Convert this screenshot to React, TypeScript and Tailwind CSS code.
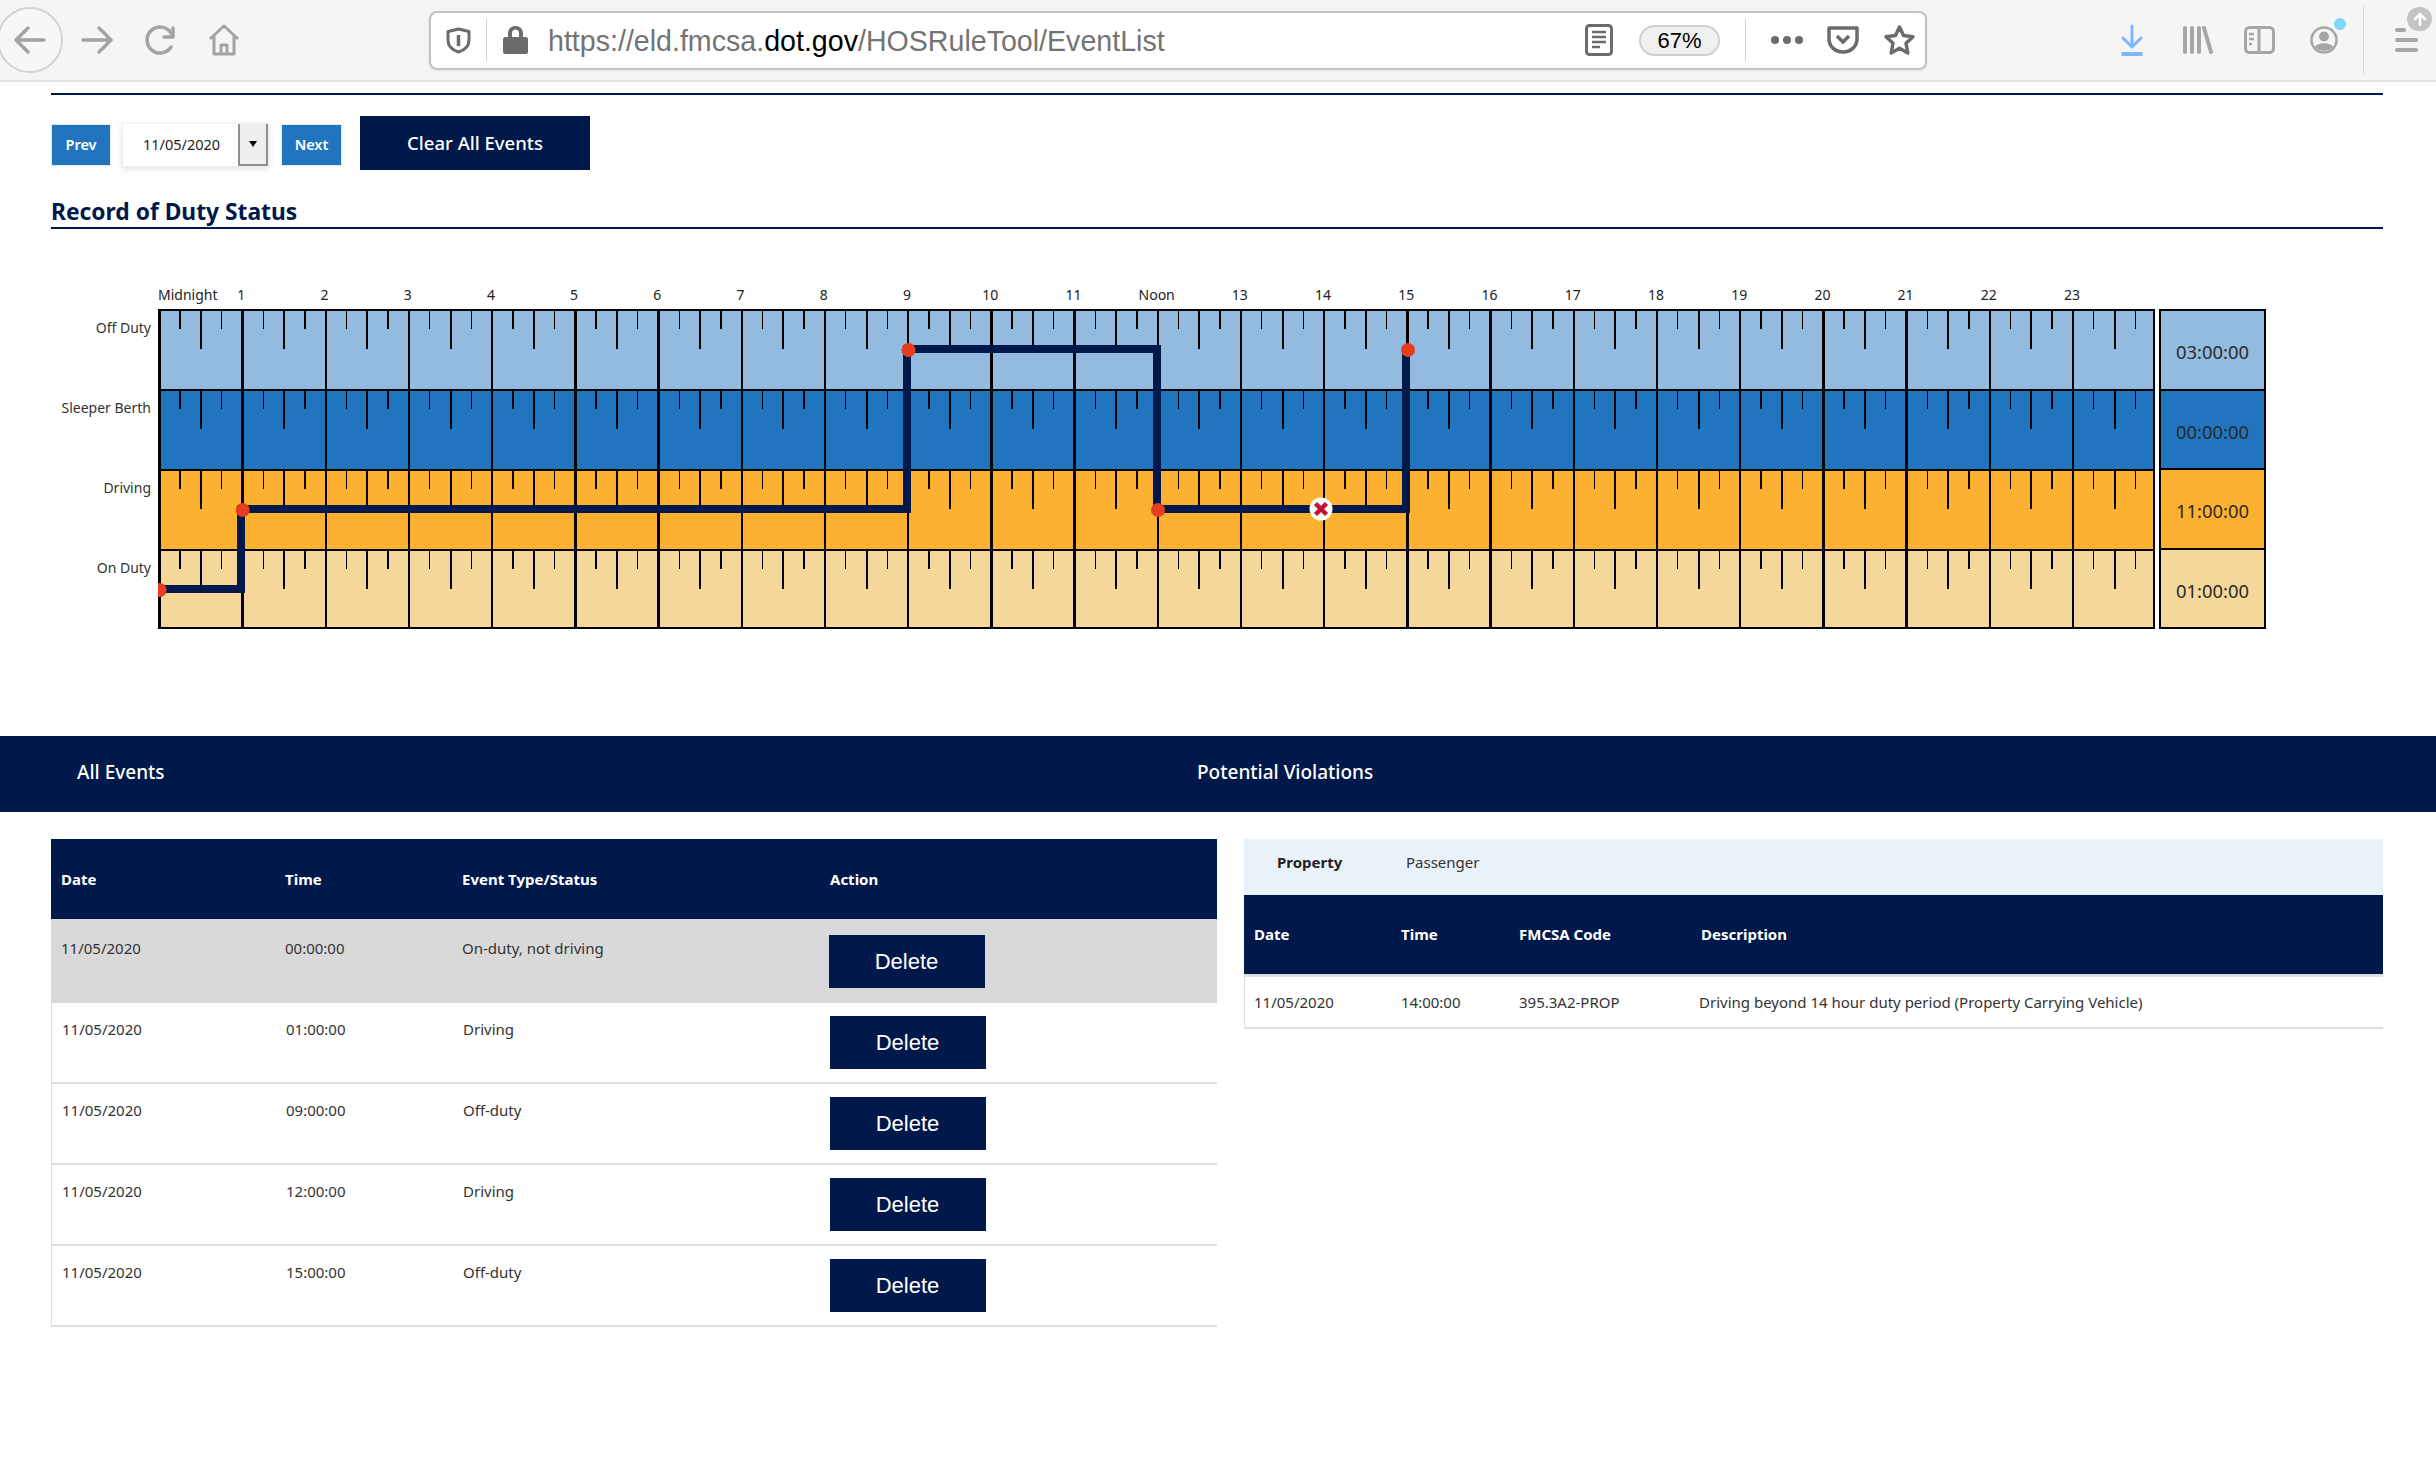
const navy = "#00184a"

const HOUR = 83.2
const hourLabels = ["1", "2", "3", "4", "5", "6", "7", "8", "9", "10", "11", "Noon", "13", "14", "15", "16", "17", "18", "19", "20", "21", "22", "23"]
const rowBands = [
  { name: "Off Duty", total: "03:00:00", fill: "#92bbdf", y: 0 },
  { name: "Sleeper Berth", total: "00:00:00", fill: "#2075be", y: 80 },
  { name: "Driving", total: "11:00:00", fill: "#fcb131", y: 160 },
  { name: "On Duty", total: "01:00:00", fill: "#f5d899", y: 240 },
]
const events = [
  { time: "00:00:00", status: "On-duty, not driving" },
  { time: "01:00:00", status: "Driving" },
  { time: "09:00:00", status: "Off-duty" },
  { time: "12:00:00", status: "Driving" },
  { time: "15:00:00", status: "Off-duty" },
]

function Toolbar() {
  return (
    <div className="flex h-[82px] items-center overflow-hidden border-b-2 border-[#e3e3e3] bg-[#f5f5f5]">
      {/* nav buttons */}
      <div className="ml-[-3px] flex h-[66px] w-[66px] shrink-0 items-center justify-center rounded-full border-2 border-[#d2d2d2] bg-[#f7f7f7]">
        <svg width="34" height="30" viewBox="0 0 34 30" fill="none" stroke="#a3a3a3" strokeWidth="3.5" strokeLinecap="round" strokeLinejoin="round">
          <path d="M15 3 3 15l12 12M3 15h28" />
        </svg>
      </div>
      <svg className="ml-[17px] shrink-0" width="34" height="30" viewBox="0 0 34 30" fill="none" stroke="#a3a3a3" strokeWidth="3.5" strokeLinecap="round" strokeLinejoin="round">
        <path d="M19 3l12 12-12 12M31 15H3" />
      </svg>
      <svg className="ml-[31px] shrink-0" width="32" height="30" viewBox="0 0 32 30" fill="none" stroke="#a3a3a3" strokeWidth="3.5" strokeLinecap="round" strokeLinejoin="round">
        <path d="M26 22a13 13 0 1 1 0-14" />
        <path d="M28 3v9h-9" />
      </svg>
      <svg className="ml-[31px] shrink-0" width="32" height="32" viewBox="0 0 32 32" fill="none" stroke="#a3a3a3" strokeWidth="3" strokeLinejoin="round">
        <path d="M2 15 16 2l14 13M6 12v18h20V12" />
        <path d="M13 30v-9h6v9" />
      </svg>

      {/* url box */}
      <div className="ml-[189px] flex h-[59px] w-[1498px] shrink-0 items-center rounded-lg border-2 border-[#c2c2c2] bg-white shadow-[0_1px_3px_rgba(0,0,0,0.08)]">
        <svg className="ml-[15px] shrink-0" width="25" height="27" viewBox="0 0 25 27" fill="none" stroke="#6b6b6b" strokeWidth="3" strokeLinejoin="round">
          <path d="M12.5 2 2 4.5V13c0 6 4 10 10.5 12C19 23 23 19 23 13V4.5z" />
          <path d="M12.5 8v11" strokeWidth="3.5" />
        </svg>
        <div className="ml-[15px] h-[42px] w-px shrink-0 bg-[#cfcfcf]" />
        <svg className="ml-[16px] shrink-0" width="25" height="28" viewBox="0 0 25 28" fill="#6b6b6b">
          <path d="M12.5 0C8 0 5 3 5 7.5V11H2.5A2.5 2.5 0 0 0 0 13.5V25.5A2.5 2.5 0 0 0 2.5 28h20a2.500 2.500 0 0 0 2.500-2.500v-12A2.500 2.500 0 0 0 22.500 11H20V7.500C20 3 17 0 12.500 0ZM9 11V7.500C9 5 10.500 3.500 12.500 3.500S16 5 16 7.500V11Z" />
        </svg>
        <div className="ml-[20px] w-[1037px] shrink-0 pt-[3px] font-['Liberation_Sans',sans-serif] text-[28.600px] leading-none text-[#737373]">
          https://eld.fmcsa.<span className="text-black">dot.gov</span>/HOSRuleTool/EventList
        </div>
        <svg className="shrink-0" width="28" height="32" viewBox="0 0 28 32" fill="none">
          <rect x="1.500" y="1.500" width="25" height="29" rx="3" fill="#fff" stroke="#6b6b6b" strokeWidth="3" />
          <path d="M7 8h14M7 13h14M7 18h14M7 23h8" stroke="#6b6b6b" strokeWidth="2.500" />
        </svg>
        <div className="ml-[26px] flex h-[31px] w-[81px] shrink-0 items-center justify-center rounded-full border-2 border-[#d0d0d0] bg-[#f0f0f0] font-['Liberation_Sans',sans-serif] text-[22px] text-black">
          67%
        </div>
        <div className="ml-[25px] h-[42px] w-px shrink-0 bg-[#cfcfcf]" />
        <svg className="ml-[25px] shrink-0" width="32" height="8" viewBox="0 0 32 8" fill="#6b6b6b">
          <circle cx="4" cy="4" r="4" />
          <circle cx="16" cy="4" r="4" />
          <circle cx="28" cy="4" r="4" />
        </svg>
        <svg className="ml-[24px] shrink-0" width="32" height="28" viewBox="0 0 32 28" fill="none" stroke="#6b6b6b">
          <path d="M2 2h28v11c0 7-6 13-14 13S2 20 2 13z" strokeWidth="3.500" strokeLinejoin="round" />
          <path d="M10 10l6 6 6-6" strokeWidth="3.500" />
        </svg>
        <svg className="ml-[24px] shrink-0" width="33" height="32" viewBox="0 0 33 32" fill="none" stroke="#6b6b6b" strokeWidth="3.500" strokeLinejoin="round">
          <path d="M16.500 3 20.500 11.500 30 12.800 23 19.300 24.800 29 16.500 24.300 8.200 29 10 19.300 3 12.800 12.500 11.500z" />
        </svg>
      </div>

      {/* right side tools */}
      <svg className="ml-[193px] shrink-0" width="24" height="32" viewBox="0 0 24 32" fill="none" stroke="#7ab9fb" strokeWidth="3" strokeLinecap="round" strokeLinejoin="round">
        <path d="M12 2v20M3 14l9 9 9-9" />
        <path d="M1.500 30h21" strokeWidth="4" strokeLinecap="butt" />
      </svg>
      <svg className="ml-[38px] shrink-0" width="31" height="28" viewBox="0 0 31 28" fill="none" stroke="#a6a6a6" strokeWidth="4" strokeLinecap="round">
        <path d="M3 2v24M10 2v24M17 2v24M22 2l7 24" />
      </svg>
      <svg className="ml-[31px] shrink-0" width="31" height="28" viewBox="0 0 31 28" fill="none" stroke="#a6a6a6" strokeWidth="3">
        <rect x="1.500" y="1.500" width="28" height="25" rx="4" />
        <path d="M15 2v24" />
        <path d="M5 8h5M5 13h5M5 18h3" strokeWidth="2.500" />
      </svg>
      <div className="relative ml-[35px] shrink-0">
        <svg width="28" height="28" viewBox="0 0 28 28" fill="none">
          <circle cx="14" cy="14" r="12.500" stroke="#a6a6a6" strokeWidth="2.500" />
          <circle cx="14" cy="10.500" r="5" fill="#a6a6a6" />
          <path d="M5 21c2-5 16-5 18 0-4 5-14 5-18 0z" fill="#a6a6a6" />
        </svg>
        <div className="absolute right-[-8px] top-[-8px] h-[12px] w-[12px] rounded-full bg-[#7fd8f7]" />
      </div>
      <div className="ml-[25px] h-[68px] w-px shrink-0 bg-[#d8d8d8]" />
      <div className="relative ml-[31px] flex w-[23px] shrink-0 flex-col gap-[6px]">
        <div className="h-[4px] w-[11px] rounded-full bg-[#a6a6a6]" />
        <div className="h-[4px] rounded-full bg-[#a6a6a6]" />
        <div className="h-[4px] rounded-full bg-[#a6a6a6]" />
        <div className="absolute left-[12px] top-[-21px] flex h-[24px] w-[25px] items-center justify-center rounded-full bg-[#c4c4c4]">
          <svg width="14" height="14" viewBox="0 0 14 14" fill="none" stroke="#fff" strokeWidth="2.500" strokeLinecap="round" strokeLinejoin="round">
            <path d="M7 13V2M2 7l5-5 5 5" />
          </svg>
        </div>
      </div>
    </div>
  )
}

function ChartGrid() {
  const lineX = (i: number) => (i === 96 ? 1996 : 1.3 + (HOUR * i) / 4)
  const ticks = Array.from({ length: 96 }, (_, i) => i).filter((i) => i % 4 !== 0)
  const lineYs = [1, 81, 161, 241]

  return (
    <svg className="block shrink-0" width="1998" height="320" viewBox="0 0 1998 320">
      {rowBands.map((r) => (
        <rect key={r.name} x="0" y={r.y} width="1997" height="80" fill={r.fill} />
      ))}
      <g shapeRendering="crispEdges" stroke="#000">
        {lineYs.map((y) => (
          <line key={y} x1="0" x2="1997" y1={y} y2={y} strokeWidth="2" />
        ))}
        <line x1="0" x2="1997" y1="319" y2="319" strokeWidth="2" />
        {Array.from({ length: 25 }, (_, i) => i).map((i) => (
          <line key={i} x1={lineX(i * 4)} x2={lineX(i * 4)} y1="0" y2="320" strokeWidth="2.400" />
        ))}
        {lineYs.map((y) =>
          ticks.map((i) => (
            <line key={y + "-" + i} x1={lineX(i)} x2={lineX(i)} y1={y} y2={y + (i % 2 === 0 ? 39 : 19)} strokeWidth={i % 2 === 0 ? 2 : 1.400} />
          ))
        )}
      </g>
      {/* duty status trace */}
      <path d="M0 280H83V200H749V40H999V200H1248V40" fill="none" stroke={navy} strokeWidth="8" strokeLinejoin="miter" />
      <circle cx="1.700" cy="281" r="7" fill="#e43d20" />
      <circle cx="84.700" cy="201" r="7" fill="#e43d20" />
      <circle cx="750.500" cy="41" r="7" fill="#e43d20" />
      <circle cx="1000" cy="201" r="7" fill="#e43d20" />
      <circle cx="1250" cy="41" r="7" fill="#e43d20" />
      <circle cx="1163" cy="200" r="11.500" fill="#fff" />
      <path d="M1157.500 194.500l11 11M1168.500 194.500l-11 11" stroke="#c4122f" strokeWidth="4.500" />
    </svg>
  )
}

function DutyChart() {
  return (
    <div className="mt-[56px] text-[14px] text-[#222]">
      <div className="ml-[107px] flex h-[24px] items-start leading-[20px]">
        <div className="w-[41.650px] shrink-0 whitespace-nowrap">Midnight</div>
        {hourLabels.map((h) => (
          <div key={h} className="w-[83.220px] shrink-0 text-center">{h}</div>
        ))}
      </div>
      <div className="flex">
        <div className="w-[100px] shrink-0">
          {rowBands.map((r) => (
            <div key={r.name} className="h-[80px] whitespace-nowrap pt-[9px] text-right leading-[20px] text-[#333]">
              {r.name}
            </div>
          ))}
        </div>
        <div className="ml-[7px] flex">
          <ChartGrid />
          <div className="ml-[3px] flex h-[320px] w-[107px] shrink-0 flex-col border-2 border-black text-[18.400px] text-[#2a2a2a]">
            {rowBands.map((r, i) => (
              <div key={r.name} className={"flex flex-1 items-center justify-center pt-[5px] " + (i < 3 ? "border-b-2 border-black" : "")} style={{ backgroundColor: r.fill }}>
                {r.total}
              </div>
            ))}
          </div>
        </div>
      </div>
    </div>
  )
}

function EventsTable() {
  return (
    <div className="w-[1166px] shrink-0">
      <div className="grid h-[80px] grid-cols-[224px_177px_368px_1fr] items-center bg-[#00184a] pl-[10px] text-[15px] font-bold text-white">
        <div>Date</div>
        <div>Time</div>
        <div>Event Type/Status</div>
        <div>Action</div>
      </div>
      {events.map((e, i) => (
        <div
          key={e.time}
          className={
            "grid grid-cols-[224px_177px_368px_1fr] items-start pl-[10px] text-[#333] " +
            (i === 0 ? "h-[84px] bg-[#d9d9d9] pt-[16px]" : "h-[81px] border-b-2 border-l border-[#dedede] pt-[13px]")
          }
        >
          <div className="pt-[3px] leading-[20px]">11/05/2020</div>
          <div className="pt-[3px] leading-[20px]">{e.time}</div>
          <div className="pt-[3px] leading-[20px]">{e.status}</div>
          <button className="ml-[-1.500px] flex h-[53px] w-[156px] items-center justify-center bg-[#00184a] font-['Liberation_Sans',sans-serif] text-[22px] text-white">
            Delete
          </button>
        </div>
      ))}
    </div>
  )
}

function ViolationsTable() {
  return (
    <div className="ml-[27px] w-[1139px] shrink-0">
      <div className="flex h-[56px] items-start bg-[#e9f1f9] pt-[13px] leading-[20px]">
        <div className="ml-[33px] w-[129px] font-bold text-[#222]">Property</div>
        <div className="text-[#333]">Passenger</div>
      </div>
      <div className="grid h-[79px] grid-cols-[147px_118px_182px_1fr] items-center bg-[#00184a] pl-[10px] text-[15px] font-bold text-white">
        <div>Date</div>
        <div>Time</div>
        <div>FMCSA Code</div>
        <div>Description</div>
      </div>
      <div className="grid h-[55px] grid-cols-[147px_118px_180px_1fr] items-center border-b-2 border-l border-t-[3px] border-[#dedede] pl-[9px] text-[#333]">
        <div>11/05/2020</div>
        <div>14:00:00</div>
        <div>395.3A2-PROP</div>
        <div>Driving beyond 14 hour duty period (Property Carrying Vehicle)</div>
      </div>
    </div>
  )
}

export default function App() {
  return (
    <div className="h-[1462px] w-[2436px] overflow-hidden bg-white font-['Noto_Sans',sans-serif]">
      <Toolbar />
      <div className="pl-[51px] pr-[53px]">
        <div className="mt-[11px] h-[2px] bg-[#00184a]" />
        <div className="mt-[21px] flex items-start">
          <button className="mt-[8px] flex h-[42px] w-[60px] items-center justify-center border border-[#e3e9f3] bg-[#2075be] text-[14.500px] font-semibold text-white">
            Prev
          </button>
          <div className="ml-[11px] mt-[7px] flex h-[44px] w-[147px] items-stretch border border-[#eef0f5] shadow-[0_2px_6px_rgba(70,90,140,0.18)]">
            <div className="flex flex-1 items-center justify-center pl-[2px] text-[14.500px] text-[#222]">11/05/2020</div>
            <div className="flex w-[30px] items-center justify-center border-b-2 border-l-2 border-r-2 border-[#8f8f8f] bg-[#efefef]">
              <div className="h-0 w-0 border-x-[4.500px] border-t-[6px] border-x-transparent border-t-black" />
            </div>
          </div>
          <button className="ml-[12px] mt-[8px] flex h-[42px] w-[61px] items-center justify-center border border-[#e3e9f3] bg-[#2075be] text-[14.500px] font-semibold text-white">
            Next
          </button>
          <button className="ml-[18px] flex h-[54px] w-[230px] items-center justify-center bg-[#00184a] text-[18.500px] font-medium text-white">
            Clear All Events
          </button>
        </div>
        <h2 className="mt-[25px] h-[34px] border-b-2 border-[#00184a] text-[22.800px] font-bold leading-[33px] text-[#00184a]">
          Record of Duty Status
        </h2>
        <DutyChart />
      </div>

      <div className="mt-[107px] flex h-[76px] items-center bg-[#00184a] pb-[3px] text-[19px] font-medium text-white">
        <div className="w-[1197px] shrink-0 pl-[77px]">All Events</div>
        <div>Potential Violations</div>
      </div>

      <div className="mt-[27px] flex items-start pl-[51px] text-[15px]">
        <EventsTable />
        <ViolationsTable />
      </div>
    </div>
  )
}
